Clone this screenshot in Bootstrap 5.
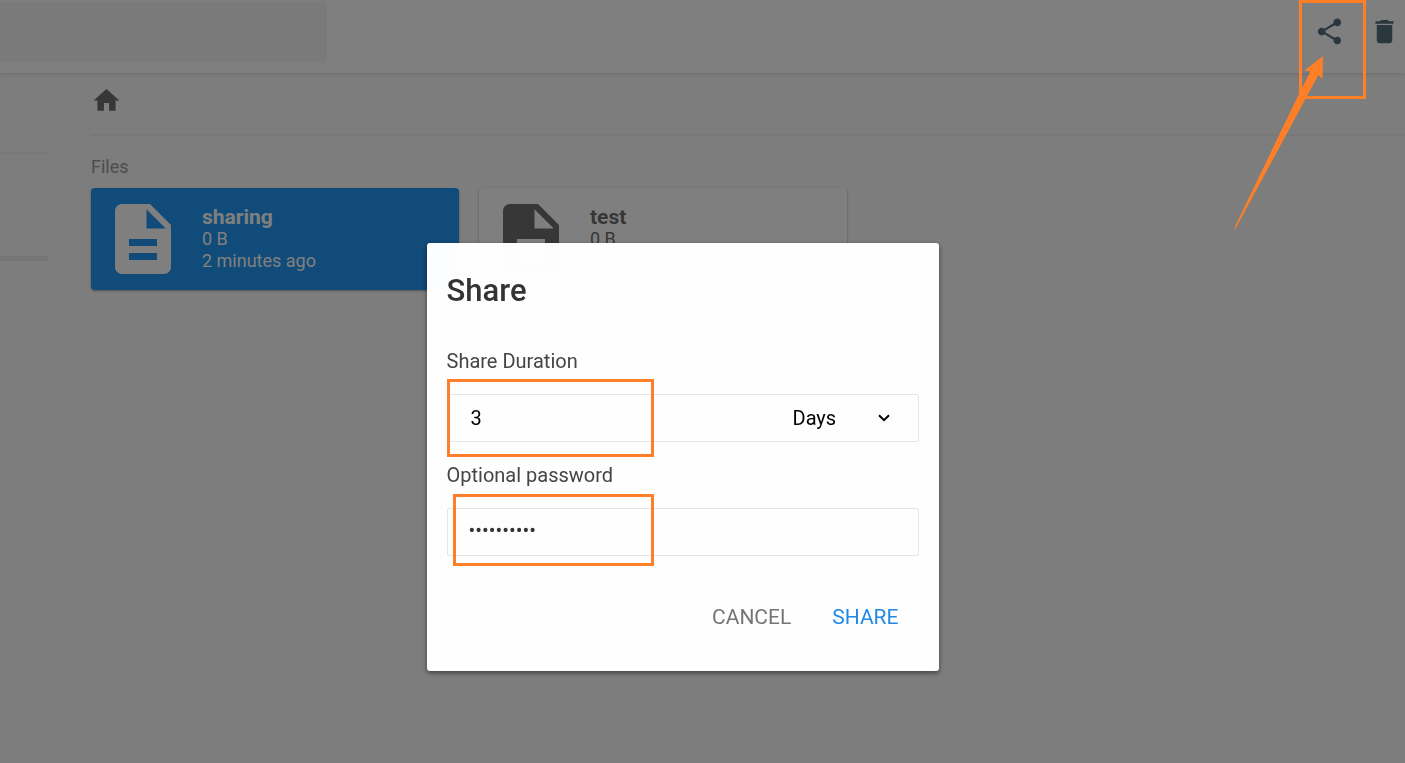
<!DOCTYPE html>
<html lang="en">
<head>
<meta charset="utf-8">
<meta name="viewport" content="width=device-width, initial-scale=1">
<title>Files</title>
<link rel="stylesheet" href="https://cdn.jsdelivr.net/npm/bootstrap@5.3.0/dist/css/bootstrap.min.css">
<style>
  body { font-family: Roboto, "Liberation Sans", sans-serif; font-size: 18px; line-height: 22px; background: #fafafa; color: #6f6f6f; min-height: 100vh; overflow: hidden; }
  .topbar { height: 73px; background: #fff; padding: 2px 5px 11px 0; box-shadow: 0 0 5px rgba(0,0,0,.2); }
  .search-field { width: 327px; height: 60px; border: 0; border-radius: 0 5px 5px 0; background: #f5f5f5; }
  .tools { padding-bottom: 2px; }
  .tool-btn { border: 0; padding: 0; background: none; color: #546e7a; line-height: 0; }
  .glyph { width: 31px; height: 31px; fill: currentColor; }
  .side { width: 50px; margin-right: 41px; padding-top: 79px; }
  .side hr { margin: 0; opacity: 1; border-top: 2px solid #f1f1f1; }
  .usage { width: 48px; height: 5px; margin-top: 102px; background: #eaeaea; }
  .crumbs { height: 63px; padding-top: 12px; border-bottom: 2px solid #f1f1f1; color: #6f6f6f; }
  .crumbs a { color: inherit; display: inline-block; line-height: 0; }
  .section-title { font-size: 18px; line-height: 22px; font-weight: 400; margin: 20px 0 10px; color: #9a9a9a; }
  .file-grid { gap: 20px; }
  .file-card { width: 368px; height: 102px; padding: 9px 10px; gap: 17px; border-radius: 4px; background: #fff; color: #6f6f6f; box-shadow: 0 1px 3px rgba(0,0,0,.12), 0 1px 2px rgba(0,0,0,.24); text-decoration: none; }
  .file-card.chosen { background: #2196f3; color: #fff; }
  .file-card svg { width: 84px; height: 84px; fill: currentColor; flex: none; }
  .file-card strong { font-size: 21px; line-height: 22px; font-weight: 700; }
  .shade { position: fixed; inset: 0; background: rgba(0,0,0,.5); padding: 151px 40px 0 0; }
  .dialog { width: 512px; padding: 30px 20px 42px; border-radius: 3px; background: #fff; color: #333; opacity: .99; font-size: 20px; line-height: 24px; box-shadow: 0 2px 5px rgba(0,0,0,.5); }
  .dialog h2 { font-size: 31px; line-height: 36px; font-weight: 500; margin: 0 0 40px; color: #333; }
  .dialog label { display: block; margin-bottom: 21px; color: #444; }
  .field { height: 48px; border: 1px solid #e6e6e6; border-radius: 2px; position: relative; }
  .field.duration { margin-bottom: 21px; }
  .field input { border: 0; background: none; outline: 0; padding: 0 23px; color: #000; min-width: 0; appearance: textfield; }
  .field input[type=password] { padding: 0 21px 4px; color: #333; }
  .field select { width: 149px; border: 0; outline: 0; appearance: none; padding: 0 24px; color: #000; background: url("data:image/svg+xml,%3Csvg xmlns='http://www.w3.org/2000/svg' viewBox='0 0 12 8'%3E%3Cpath d='M1 1.2L6 6.2L11 1.2' fill='none' stroke='%23000' stroke-width='2'/%3E%3C/svg%3E") no-repeat right 28px center / 12px 8px; }
  .actions { margin-top: 49px; padding-right: 20px; gap: 41px; }
  .actions button { border: 0; padding: 0; background: none; color: #757575; font-size: 21px; line-height: 24px; }
  .actions .confirm { color: #2189e6; }
  /* callouts drawn over the controls */
  .callout-box { position: absolute; border: 3px solid #ff7f27; pointer-events: none; }
  .on-duration { left: -1px; top: -16px; width: 207px; height: 78px; }
  .on-password { left: 5px; top: -15px; width: 201px; height: 72px; }
  .on-share { right: 39px; top: 0; width: 67px; height: 99px; }
  .pointer { position: absolute; right: 81px; top: 56px; width: 91px; height: 173px; fill: #ff7f27; pointer-events: none; }
</style>
<script src="https://cdn.jsdelivr.net/npm/bootstrap@5.3.0/dist/js/bootstrap.bundle.min.js"></script>
</head>
<body>
<header class="topbar d-flex align-items-center justify-content-between position-relative">
  <input class="search-field" type="search" aria-label="Search">
  <div class="tools d-flex gap-4">
    <button class="tool-btn" type="button" aria-label="Share"><svg class="glyph" viewBox="0 0 24 24"><path d="M18 16.080c-.76 0-1.440.3-1.960.77L8.910 12.700c.05-.23.09-.46.09-.7s-.04-.47-.09-.7l7.050-4.110c.54.5 1.250.81 2.040.81 1.660 0 3-1.340 3-3s-1.340-3-3-3-3 1.340-3 3c0 .24.04.47.09.7L8.040 9.810C7.500 9.310 6.790 9 6 9c-1.660 0-3 1.340-3 3s1.340 3 3 3c.79 0 1.500-.31 2.040-.81l7.120 4.160c-.05.21-.08.43-.08.65 0 1.610 1.310 2.920 2.920 2.920s2.920-1.310 2.920-2.920-1.310-2.920-2.920-2.920z"/></svg></button>
    <button class="tool-btn" type="button" aria-label="Delete"><svg class="glyph" viewBox="0 0 24 24"><path d="M6 19c0 1.100.9 2 2 2h8c1.100 0 2-.9 2-2V7H6v12zM19 4h-3.500l-1-1h-5l-1 1H5v2h14V4z"/></svg></button>
  </div>
</header>
<div class="d-flex">
  <aside class="side flex-shrink-0"><hr><div class="usage"></div></aside>
  <main class="flex-grow-1">
    <nav class="crumbs" aria-label="Breadcrumb"><a href="#" aria-label="Home"><svg class="glyph" viewBox="0 0 24 24"><path d="M10 20v-6h4v6h5v-8h3L12 3 2 12h3v8z"/></svg></a></nav>
    <h2 class="section-title">Files</h2>
    <div class="file-grid d-flex flex-wrap">
      <a href="#" class="file-card chosen d-flex">
        <svg viewBox="0 0 24 24"><path d="M14 2H6c-1.100 0-1.990.9-1.990 2L4 20c0 1.100.89 2 1.990 2H18c1.100 0 2-.9 2-2V8l-6-6zm2 16H8v-2h8v2zm0-4H8v-2h8v2zm-3-5V3.500L18.500 9H13z"/></svg>
        <span class="d-flex flex-column justify-content-center"><strong>sharing</strong><span>0 B</span><span>2 minutes ago</span></span>
      </a>
      <a href="#" class="file-card d-flex">
        <svg viewBox="0 0 24 24"><path d="M14 2H6c-1.100 0-1.990.9-1.990 2L4 20c0 1.100.89 2 1.990 2H18c1.100 0 2-.9 2-2V8l-6-6zm2 16H8v-2h8v2zm0-4H8v-2h8v2zm-3-5V3.500L18.500 9H13z"/></svg>
        <span class="d-flex flex-column justify-content-center"><strong>test</strong><span>0 B</span><span>2 minutes ago</span></span>
      </a>
    </div>
  </main>
</div>
<div class="shade d-flex align-items-center justify-content-center">
  <form class="dialog" role="dialog" aria-labelledby="share-title">
    <h2 id="share-title">Share</h2>
    <label for="duration">Share Duration</label>
    <div class="field duration d-flex">
      <input id="duration" class="flex-grow-1" type="number" value="3">
      <select aria-label="Unit"><option>Seconds</option><option>Minutes</option><option>Hours</option><option selected>Days</option></select>
      <span class="callout-box on-duration"></span>
    </div>
    <label for="password">Optional password</label>
    <div class="field d-flex">
      <input id="password" class="flex-grow-1" type="password" value="abcdefghij">
      <span class="callout-box on-password"></span>
    </div>
    <div class="actions d-flex justify-content-end">
      <button type="button">CANCEL</button>
      <button type="button" class="confirm">SHARE</button>
    </div>
  </form>
  <span class="callout-box on-share"></span>
  <svg class="pointer" viewBox="0 0 91 173"><path d="M90 0L71.500 14.500L77.500 15.500L65 40L1.300 172L2.300 173L74 40L85.500 19L89.500 23Z"/></svg>
</div>
</body>
</html>
